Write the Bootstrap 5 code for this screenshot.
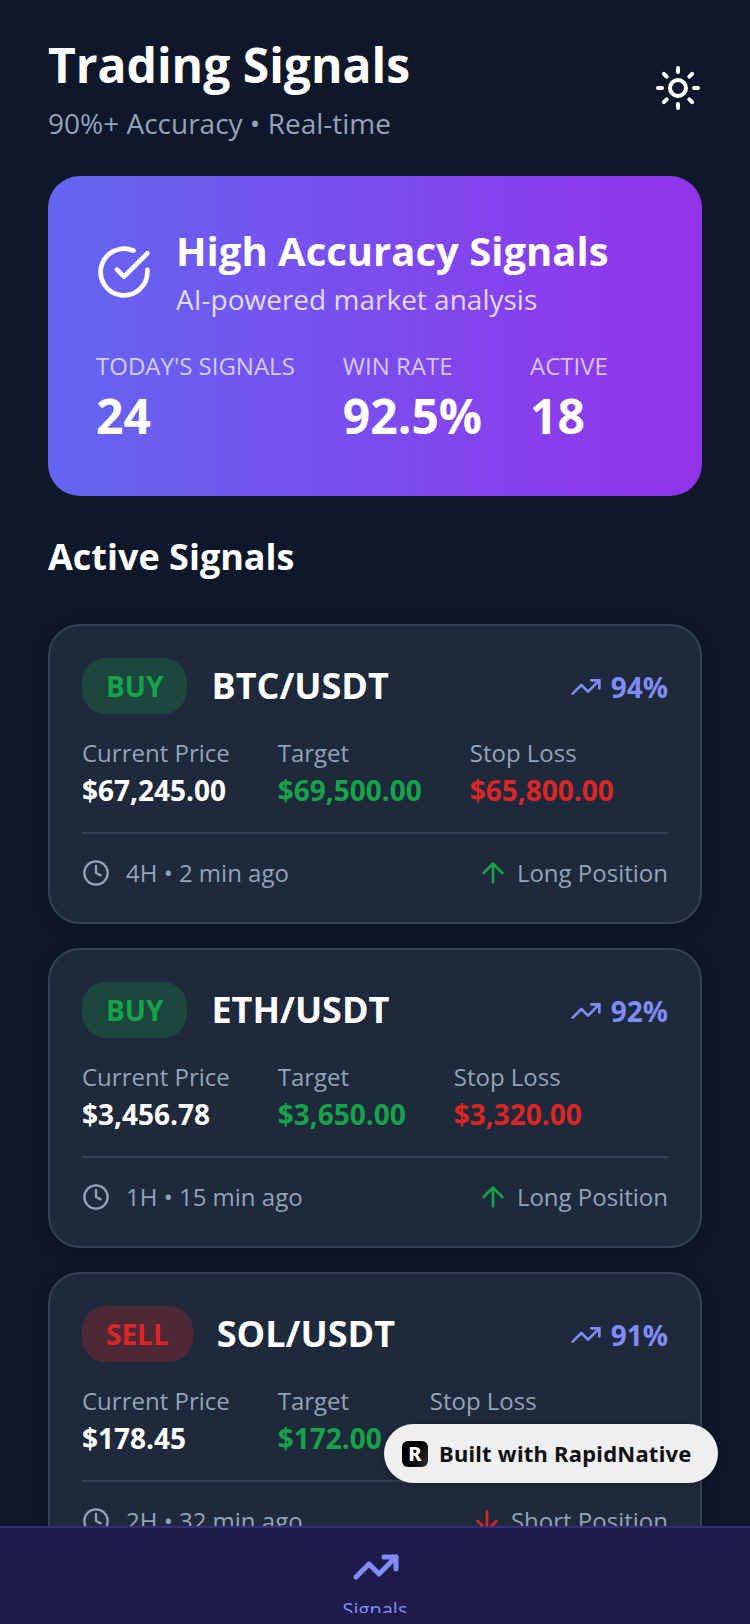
<!DOCTYPE html>
<html lang="en">
<head>
<meta charset="utf-8">
<title>Trading Signals</title>
<link href="https://cdn.jsdelivr.net/npm/bootstrap@5.3.0/dist/css/bootstrap.min.css" rel="stylesheet">
<style>
html,body{height:100%;overflow:hidden}
body{background:#0f172a;font-family:"Open Sans",sans-serif;color:#fff}
.screen{height:1624px;position:relative}
.scroller{flex:1 1 0;min-height:0;overflow:hidden;padding:37px 48px 0}
.app-title{font-size:48px;font-weight:700;line-height:56px;margin:0}
.app-sub{font-size:28px;line-height:40px;color:#94a3b8;margin:10px 0 0}
.sun-btn{width:48px;height:48px;margin-top:27px}
.hero{margin-top:33px;height:320px;border-radius:32px;padding:51px 48px 0;background:linear-gradient(90deg,#6366f1,#9333ea)}
.hero-title{font-size:40px;font-weight:700;line-height:48px;margin:0}
.hero-sub{font-size:28px;line-height:36px;color:rgba(255,255,255,.8);margin:6px 0 0}
.hero-stats{gap:48px;margin-top:33px}
.stat-label{font-size:24px;line-height:32px;color:rgba(255,255,255,.7);text-transform:uppercase}
.stat-value{font-size:48px;font-weight:700;line-height:56px;margin-top:6px}
.sec-title{font-size:36px;font-weight:700;line-height:44px;margin:39px 0 45px}
.sig-card{background:#1e293b;border:2px solid #334155;border-radius:32px;padding:32px;margin-bottom:24px;box-shadow:0 4px 16px rgba(0,0,0,.25)}
.side-pill{height:56px;border-radius:24px;padding:0 24px;font-size:28px;font-weight:700;line-height:56px}
.side-buy{background:rgba(22,163,74,.25);color:#16a34a}
.side-sell{background:rgba(220,38,38,.25);color:#dc2626}
.pair{font-size:36px;font-weight:700;line-height:48px;margin-left:24px}
.conf{font-size:28px;font-weight:700;color:#818cf8;gap:9px;margin-top:2px}
.price-row{gap:48px;margin-top:21px}
.price-label{font-size:24px;line-height:36px;color:#94a3b8}
.price-value{font-size:28px;font-weight:700;line-height:36px;margin-top:1px}
.c-up{color:#16a34a}.c-down{color:#dc2626}
.foot-row{border-top:2px solid #334155;margin-top:24px;padding-top:22px;font-size:24px;line-height:34px;color:#94a3b8}
.foot-gap{gap:16px}
.foot-gap2{gap:8px}
.tabbar{height:98px;background:#1e1b4b;border-top:2px solid #312e81;position:relative;z-index:2}
.tab-clip{height:85px;overflow:hidden;padding-top:15px}
.tab-label{font-size:20px;line-height:28px;color:#818cf8;margin-top:5px}
.built{position:absolute;left:384px;top:1424px;width:334px;height:59px;border-radius:30px;background:#eeeff1;box-shadow:0 2px 8px rgba(0,0,0,.2);font-family:"Noto Sans",sans-serif;font-size:22px;letter-spacing:.25px;font-weight:700;color:#111;gap:11px;padding-left:18px;z-index:3}
.built-logo{width:26px;height:26px;border-radius:6px;background:linear-gradient(120deg,#000 50%,#333);color:#fff;font-size:20px;line-height:26px;text-align:center;font-weight:800;letter-spacing:0}
svg.ic{fill:none;stroke:currentColor;stroke-linecap:round;stroke-linejoin:round;stroke-width:2;flex:none;display:block}
svg.tab-ic{color:#818cf8;stroke-width:2.5;margin-left:2px}
</style>
</head>
<body>
<div class="screen d-flex flex-column">
  <div class="scroller">
    <div class="d-flex justify-content-between align-items-start">
      <div>
        <h1 class="app-title">Trading Signals</h1>
        <p class="app-sub">90%+ Accuracy • Real-time</p>
      </div>
      <svg class="ic sun-btn text-white" viewBox="0 0 24 24"><circle cx="12" cy="12" r="4"/><path d="M12 2v2M12 20v2M4.93 4.93l1.41 1.41M17.66 17.66l1.41 1.41M2 12h2M20 12h2M6.34 17.66l-1.41 1.41M19.07 4.93l-1.41 1.41"/></svg>
    </div>

    <div class="hero">
      <div class="d-flex align-items-center gap-4">
        <svg class="ic text-white" width="56" height="56" viewBox="0 0 24 24"><path d="M22 11.08V12a10 10 0 1 1-5.93-9.14"/><path d="M22 4 12 14.01l-3-3"/></svg>
        <div>
          <h2 class="hero-title">High Accuracy Signals</h2>
          <p class="hero-sub">AI-powered market analysis</p>
        </div>
      </div>
      <div class="d-flex hero-stats">
        <div><div class="stat-label">Today's Signals</div><div class="stat-value">24</div></div>
        <div><div class="stat-label">Win Rate</div><div class="stat-value">92.5%</div></div>
        <div><div class="stat-label">Active</div><div class="stat-value">18</div></div>
      </div>
    </div>

    <h3 class="sec-title">Active Signals</h3>

    <div class="sig-card">
      <div class="d-flex align-items-center justify-content-between">
        <div class="d-flex align-items-center"><span class="side-pill side-buy">BUY</span><span class="pair">BTC/USDT</span></div>
        <div class="conf d-flex align-items-center"><svg class="ic" width="32" height="32" viewBox="0 0 24 24"><path d="M22 7l-8.5 8.5-5-5L2 17"/><path d="M16 7h6v6"/></svg>94%</div>
      </div>
      <div class="d-flex price-row">
        <div><div class="price-label">Current Price</div><div class="price-value">$67,245.00</div></div>
        <div><div class="price-label">Target</div><div class="price-value c-up">$69,500.00</div></div>
        <div><div class="price-label">Stop Loss</div><div class="price-value c-down">$65,800.00</div></div>
      </div>
      <div class="foot-row d-flex justify-content-between align-items-center">
        <div class="d-flex align-items-center foot-gap"><svg class="ic" width="28" height="28" viewBox="0 0 24 24"><circle cx="12" cy="12" r="10"/><path d="M12 6v6l4 2"/></svg>4H • 2 min ago</div>
        <div class="d-flex align-items-center foot-gap2"><svg class="ic c-up" width="32" height="32" viewBox="0 0 24 24"><path d="m5 12 7-7 7 7M12 19V5"/></svg>Long Position</div>
      </div>
    </div>

    <div class="sig-card">
      <div class="d-flex align-items-center justify-content-between">
        <div class="d-flex align-items-center"><span class="side-pill side-buy">BUY</span><span class="pair">ETH/USDT</span></div>
        <div class="conf d-flex align-items-center"><svg class="ic" width="32" height="32" viewBox="0 0 24 24"><path d="M22 7l-8.5 8.5-5-5L2 17"/><path d="M16 7h6v6"/></svg>92%</div>
      </div>
      <div class="d-flex price-row">
        <div><div class="price-label">Current Price</div><div class="price-value">$3,456.78</div></div>
        <div><div class="price-label">Target</div><div class="price-value c-up">$3,650.00</div></div>
        <div><div class="price-label">Stop Loss</div><div class="price-value c-down">$3,320.00</div></div>
      </div>
      <div class="foot-row d-flex justify-content-between align-items-center">
        <div class="d-flex align-items-center foot-gap"><svg class="ic" width="28" height="28" viewBox="0 0 24 24"><circle cx="12" cy="12" r="10"/><path d="M12 6v6l4 2"/></svg>1H • 15 min ago</div>
        <div class="d-flex align-items-center foot-gap2"><svg class="ic c-up" width="32" height="32" viewBox="0 0 24 24"><path d="m5 12 7-7 7 7M12 19V5"/></svg>Long Position</div>
      </div>
    </div>

    <div class="sig-card">
      <div class="d-flex align-items-center justify-content-between">
        <div class="d-flex align-items-center"><span class="side-pill side-sell">SELL</span><span class="pair">SOL/USDT</span></div>
        <div class="conf d-flex align-items-center"><svg class="ic" width="32" height="32" viewBox="0 0 24 24"><path d="M22 7l-8.5 8.5-5-5L2 17"/><path d="M16 7h6v6"/></svg>91%</div>
      </div>
      <div class="d-flex price-row">
        <div><div class="price-label">Current Price</div><div class="price-value">$178.45</div></div>
        <div><div class="price-label">Target</div><div class="price-value c-up">$172.00</div></div>
        <div><div class="price-label">Stop Loss</div><div class="price-value c-down">$185.00</div></div>
      </div>
      <div class="foot-row d-flex justify-content-between align-items-center">
        <div class="d-flex align-items-center foot-gap"><svg class="ic" width="28" height="28" viewBox="0 0 24 24"><circle cx="12" cy="12" r="10"/><path d="M12 6v6l4 2"/></svg>2H • 32 min ago</div>
        <div class="d-flex align-items-center foot-gap2"><svg class="ic c-down" width="32" height="32" viewBox="0 0 24 24"><path d="M12 5v14M19 12l-7 7-7-7"/></svg>Short Position</div>
      </div>
    </div>
  </div>

  <div class="tabbar">
    <div class="tab-clip d-flex flex-column align-items-center">
      <svg class="ic tab-ic" width="48" height="48" viewBox="0 0 24 24"><path d="M22 7l-8.5 8.5-5-5L2 17"/><path d="M16 7h6v6"/></svg>
      <div class="tab-label">Signals</div>
    </div>
  </div>

  <div class="built d-flex align-items-center"><span class="built-logo">R</span><span>Built with RapidNative</span></div>
</div>
<script src="https://cdn.jsdelivr.net/npm/bootstrap@5.3.0/dist/js/bootstrap.bundle.min.js"></script>
</body>
</html>
